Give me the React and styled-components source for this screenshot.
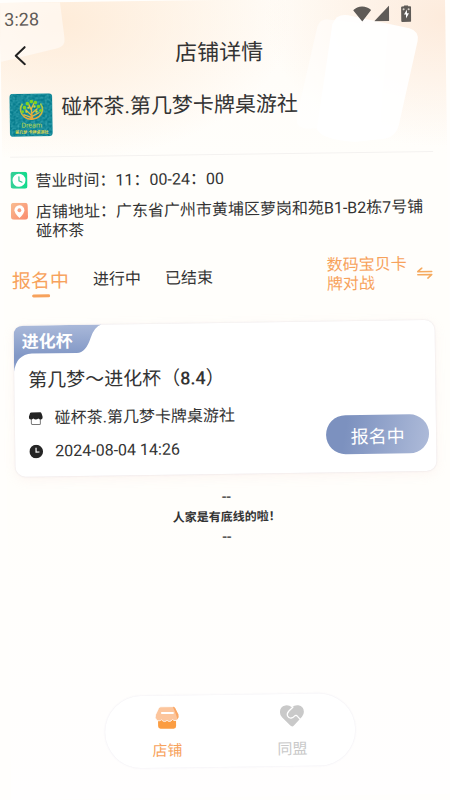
import React, { useState } from 'react'
import styled, { createGlobalStyle, ThemeProvider } from 'styled-components'

const theme = {
    text_primary: '#333333',
    primary: '#f7a25c',
    muted: '#c9c9c9',
    bg: '#fffefb',
    card: '#ffffff',
};

const GlobalStyle = createGlobalStyle`
    * {
        box-sizing: border-box;
    }
    body {
        margin: 0;
        background: #fffefc;
        color: #333333;
        font-family: Roboto, "Noto Sans CJK SC", sans-serif;
    }
    button {
        padding: 0;
        border: 0;
        background: none;
        color: inherit;
        font-family: inherit;
        cursor: pointer;
    }
    svg {
        display: block;
        flex-shrink: 0;
    }
`;

const Page = styled.div`
    display: flex;
    min-height: 100vh;
    padding: 3px 5px 0 0;
    overflow: hidden;
`;

// the whole phone screen leans slightly to the left
const Screen = styled.div`
    position: relative;
    display: flex;
    flex-direction: column;
    flex: 1;
    min-width: 0;
    padding: 0 14px 30px 8px;
    transform: rotate(-0.8deg);
    transform-origin: top left;
    background:
        radial-gradient(ellipse 180px 130px at 100% 20px, #fdebdc 0%, rgba(253, 235, 220, 0) 100%),
        radial-gradient(ellipse 230px 140px at 60px 20px, #feecd9 0%, rgba(254, 236, 217, 0) 100%),
        linear-gradient(#fffcf7, #fffefb 160px, #fffefb 500px, #fffefe);
`;

const Backdrop = styled.svg`
    position: absolute;
    top: 0;
    ${({ $side }) => $side}: 0;
`;

const StatusBar = styled.div`
    position: relative;
    display: flex;
    align-items: center;
    justify-content: space-between;
    height: 32px;
    padding-right: 20px;
    margin-left: -4px;
    color: #5f5b57;
    font-size: 18px;
`;

const StatusIcons = styled.div`
    display: flex;
    align-items: center;
    gap: 3px;
`;

const Header = styled.header`
    position: relative;
    display: grid;
    grid-template-columns: 32px 1fr 34px;
    align-items: center;
    height: 42px;
`;

const BackButton = styled.button`
    padding-left: 5px;
`;

const Title = styled.h1`
    margin: 0;
    font-size: 22px;
    font-weight: 400;
    line-height: 32px;
    text-align: center;
`;

const Shop = styled.section`
    position: relative;
    display: flex;
    gap: 9px;
    padding: 17px 0 20px;
    border-bottom: 1px solid #f4f2f0;
`;

const ShopName = styled.h2`
    margin: 0;
    font-size: 21px;
    font-weight: 400;
    line-height: 28px;
`;

const InfoList = styled.div`
    display: flex;
    flex-direction: column;
    gap: 12px;
    padding-top: 14px;
`;

const InfoRow = styled.div`
    display: flex;
    gap: 8px;
    font-size: 16px;
    line-height: 19px;
`;

const Filters = styled.div`
    display: flex;
    align-items: center;
    justify-content: space-between;
    margin-top: 19px;
    padding-right: 2px;
`;

const Tabs = styled.div`
    display: flex;
    gap: 24px;
`;

const Tab = styled.button`
    position: relative;
    height: 38px;
    color: ${({ theme, $active }) => ($active ? theme.primary : theme.text_primary)};
    font-size: ${({ $active }) => ($active ? '19px' : '16px')};
    &::after {
        content: '';
        display: ${({ $active }) => ($active ? 'block' : 'none')};
        position: absolute;
        bottom: 0;
        left: calc(50% - 9px);
        width: 18px;
        height: 3px;
        border-radius: 2px;
        background: ${({ theme }) => theme.primary};
    }
`;

const GameSwitch = styled.button`
    display: flex;
    align-items: center;
    gap: 9px;
    color: ${({ theme }) => theme.primary};
    font-size: 16px;
    line-height: 19px;
    text-align: left;
    span {
        width: 81px;
    }
`;

const Card = styled.article`
    margin: 28px 1px 0;
    border-radius: 10px;
    background: ${({ theme }) => theme.card};
    box-shadow: 0 0 2px rgba(120, 110, 150, 0.2), 0 3px 12px rgba(240, 200, 190, 0.16);
`;

const Ribbon = styled.div`
    position: relative;
    padding-left: 8px;
    color: #ffffff;
    font-size: 17px;
    font-weight: 700;
    line-height: 32px;
    span {
        position: relative;
    }
`;

const CardBody = styled.div`
    display: flex;
    align-items: flex-end;
    justify-content: space-between;
    padding: 10px 7px 15px 14px;
`;

const EventTitle = styled.h3`
    margin: 0 0 15px;
    font-size: 19px;
    font-weight: 400;
    line-height: 26px;
    white-space: nowrap;
    b {
        font-size: 18px;
        font-weight: 500;
    }
`;

const Detail = styled.div`
    display: flex;
    align-items: center;
    gap: 12px;
    font-size: 16px;
    line-height: 20px;
    white-space: nowrap;
    & + & {
        margin-top: 13px;
    }
`;

const JoinButton = styled.button`
    flex-shrink: 0;
    width: 103px;
    height: 39px;
    margin-bottom: 3px;
    border-radius: 20px;
    background: linear-gradient(100deg, #7c91bf 20%, #aebbd9);
    color: #ffffff;
    font-size: 18px;
`;

const EndNote = styled.div`
    margin: 13px 0 40px;
    font-size: 12px;
    line-height: 20px;
    text-align: center;
    p {
        margin: 0;
        font-size: 16px;
    }
    strong {
        display: block;
        font-weight: 700;
    }
`;

const TabBar = styled.nav`
    display: flex;
    align-self: center;
    width: 58%;
    min-width: 250px;
    max-width: 320px;
    margin-top: auto;
    border-radius: 36px;
    background: #ffffff;
    box-shadow: 0 0 2px rgba(120, 110, 170, 0.16);
`;

const NavLink = styled.a`
    display: flex;
    flex: 1;
    flex-direction: column;
    align-items: center;
    gap: 11px;
    padding: 10px 0 7px;
    color: ${({ theme, $active }) => ($active ? theme.primary : theme.muted)};
    font-size: 15px;
    line-height: 20px;
    text-decoration: none;
`;

const WifiIcon = () => (
    <svg width="18" height="16" viewBox="0 0 18 16" fill="#5f5b57">
        <path d="M9 15.500 0 4.300C2.500 1.900 5.600.5 9 .5s6.500 1.400 9 3.800z" />
    </svg>
);

const SignalIcon = () => (
    <svg width="15" height="16" viewBox="0 0 15 16" fill="#5f5b57">
        <path d="M15 0v15.500H0z" />
    </svg>
);

const BatteryIcon = () => (
    <svg width="19" height="17" viewBox="0 0 19 17">
        <path d="M12 1V0h4v1h2q1 0 1 1v13.500q0 1-1 1h-8q-1 0-1-1V2q0-1 1-1z" fill="#5f5b57" />
        <path d="m14.800 4.200-3 5h2v4l3-5.200h-2z" fill="#fff" />
        <circle cx="11.500" cy="4" r="1" fill="#d8d2ca" />
        <circle cx="16.500" cy="4" r="1" fill="#d8d2ca" />
    </svg>
);

const BackIcon = () => (
    <svg width="13" height="20" viewBox="0 0 13 20" fill="none" stroke="#222" strokeWidth="2" strokeLinecap="round" strokeLinejoin="round">
        <path d="M11 1.500 2 10l9 8.500" />
    </svg>
);

const ShopLogo = () => (
    <svg width="43" height="43" viewBox="0 0 43 43">
        <defs>
            <filter id="grain" x="0" y="0" width="100%" height="100%">
                <feTurbulence type="fractalNoise" baseFrequency="0.5" numOctaves="2" />
                <feColorMatrix values="0 0 0 0 0.15  0 0 0 0 0.65  0 0 0 0 0.7  0 1.200 0 0 -0.45" />
            </filter>
            <clipPath id="logoShape">
                <rect width="43" height="43" rx="4" />
            </clipPath>
            <linearGradient id="gold" x1="0" y1="0" x2="0" y2="1">
                <stop offset="0" stopColor="#9ed04b" />
                <stop offset="1" stopColor="#e9a53c" />
            </linearGradient>
        </defs>
        <g clipPath="url(#logoShape)">
            <rect width="43" height="43" fill="#087d8e" />
            <rect width="43" height="43" filter="url(#grain)" />
        </g>
        <path d="M13 10a11 10 0 1 0 18 0" fill="none" stroke="url(#gold)" strokeWidth="1.600" />
        <path d="M22 26V14m0 8-6-6m6 4 6-5m-6 9-8-3m8 2 8-4m-8-2-3-7m3 5 3-6" fill="none" stroke="#e8b842" strokeWidth="1.300" />
        <path d="M20 26q2-3 1.300-7h1.600q-.5 4 1.300 7z" fill="#e8a53a" />
        <g fill="#7ed321">
            <circle cx="15" cy="14" r="1.800" />
            <circle cx="18" cy="10" r="1.800" />
            <circle cx="22" cy="8" r="1.800" />
            <circle cx="26" cy="9" r="1.800" />
            <circle cx="29" cy="13" r="1.800" />
            <circle cx="13" cy="18" r="1.500" />
            <circle cx="31" cy="17" r="1.500" />
        </g>
        <g fill="#c9dc3c">
            <circle cx="19" cy="14" r="1.200" />
            <circle cx="25" cy="13" r="1.200" />
            <circle cx="17" cy="18" r="1.200" />
            <circle cx="27" cy="18" r="1.200" />
        </g>
        <text x="22" y="34" textAnchor="middle" fontSize="7" fill="#b9d84e">Dream</text>
        <text x="22" y="40" textAnchor="middle" fontSize="4" fontWeight="700" fill="#e3d94c">第几梦·卡牌桌游社</text>
    </svg>
);

const HoursIcon = () => (
    <svg width="17" height="17" viewBox="0 0 17 17">
        <defs>
            <linearGradient id="green">
                <stop offset="0" stopColor="#36cf98" />
                <stop offset="1" stopColor="#12dc8c" />
            </linearGradient>
        </defs>
        <rect width="17" height="17" rx="3" fill="url(#green)" />
        <circle cx="8.500" cy="8.500" r="6.500" fill="#fff" />
        <path d="M8.500 5v4l3 1.500" fill="none" stroke="#35c795" strokeWidth="1.200" strokeLinecap="round" />
    </svg>
);

const PlaceIcon = () => (
    <svg width="17" height="17" viewBox="0 0 17 17">
        <defs>
            <linearGradient id="coral" x1="0" y1="0" x2="1" y2="1">
                <stop offset="0" stopColor="#f9bd92" />
                <stop offset="1" stopColor="#fa8a6d" />
            </linearGradient>
        </defs>
        <rect width="17" height="17" rx="3" fill="url(#coral)" />
        <path d="M8.500 15.300Q3.500 10.500 3.500 7.500a5 5 0 0 1 10 0q0 3-5 7.800z" fill="#fff" />
        <circle cx="8.500" cy="7.500" r="1.900" fill="#f8a184" />
    </svg>
);

const SwapIcon = () => (
    <svg width="16" height="12" viewBox="0 0 16 12" fill="none" stroke="#f5aa5f" strokeWidth="1.600" strokeLinecap="round" strokeLinejoin="round">
        <path d="M5 1 1 4.500h14M1 7.500h14L11 11" />
    </svg>
);

const StoreIcon = () => (
    <svg width="14" height="14" viewBox="0 0 14 14">
        <path d="M2.500 6v6q0 1 1 1h7q1 0 1-1V6" fill="#fff" stroke="#777" strokeWidth="1" />
        <path d="M2.500.8h9q.8 0 1.100.7L14 5.300Q14 8 11.800 8 10.500 8 9.500 7 8.300 8 7 8 5.700 8 4.500 7 3.500 8 2.200 8 0 8 0 5.300l1.400-3.800q.3-.7 1.100-.7z" fill="#222" />
    </svg>
);

const ClockIcon = () => (
    <svg width="14" height="14" viewBox="0 0 14 14">
        <circle cx="7" cy="7" r="6.800" fill="#252525" />
        <path d="M6.800 3.300v4.200h3.400" fill="none" stroke="#fff" strokeWidth="1.200" />
    </svg>
);

const NavStoreIcon = () => (
    <svg width="24" height="24" viewBox="0 0 24 24">
        <path d="M3 13h18v7.500q0 2.500-2.500 2.500h-13Q3 23 3 20.500z" fill="#fb9d42" />
        <path d="M6 1h12q1.500 0 2.300 1.500L23.500 9q1 3-1 5-1 1-2.500 1-1.500 0-2.500-1.200Q16 15.800 14.500 15.800T12 14.500q-1 1.300-2.500 1.300T6.500 14Q5.500 15 4 15q-1.500 0-2.500-1-2-2-1-5l3.200-6.500Q4.500 1 6 1z" fill="#fcc59c" stroke="#fff" strokeWidth=".8" />
        <path d="M18 1q1.500 0 2.300 1.500L23.500 9q.8 3-1 5-.8-4-4.500-13z" fill="#faa765" />
        <path d="M7 7.300h11" stroke="#fff" strokeWidth="2" strokeLinecap="round" />
    </svg>
);

const AllianceIcon = () => (
    <svg width="24" height="24" viewBox="0 0 24 24">
        <path d="M12 3.300Q15 .8 18.500 1.400 24 2.500 24 8q0 2.800-2 5l-8.200 8.600q-1.800 1.700-3.600 0L2 13Q0 10.800 0 8 0 2.500 5.500 1.400 9 .8 12 3.300z" fill="#c9c9c9" />
        <path d="M13 3.300 9 7q-2.400 2.600-1.400 5 1 2.200 3.600 2 1.800-.2 3.300-1.800 1.500-1.700 3 .2l2.500 2.800" fill="none" stroke="#fff" strokeWidth="1.300" strokeLinecap="round" />
    </svg>
);

const RibbonShape = () => (
    <Backdrop $side="left" width="88" height="46" viewBox="0 0 88 46">
        <defs>
            <linearGradient id="ribbon" x1="0" y1="0" x2="0" y2="1">
                <stop offset="0" stopColor="#a9b8d9" />
                <stop offset="0.65" stopColor="#8298c6" />
            </linearGradient>
        </defs>
        <path d="M0 46V10Q0 0 10 0h78Q81 2 77 13 72 28 63 28H18Q2 29 0 46z" fill="url(#ribbon)" />
    </Backdrop>
);

const tabs = ['报名中', '进行中', '已结束'];

const App = () => {
    const [active, setActive] = useState(0);

    return (
        <ThemeProvider theme={theme}>
            <GlobalStyle />
            <Page>
                <Screen>
                    <Backdrop $side="left" width="70" height="64" viewBox="0 0 70 64">
                        <path d="M0 0h60l4 36q1 8-7 10L0 59z" fill="#fff" opacity=".5" />
                    </Backdrop>
                    <Backdrop $side="right" width="150" height="150" viewBox="0 0 150 150">
                        <path d="M22 28q3-8 11-7l60 8-10 101-75 0q-10-2-8-12z" fill="#fff" opacity=".5" />
                        <path d="M37 26q4-11 16-9l61 14q10 3 8 13l-20 84q-3 11-14 13l-30 3q-35-3-38-14z" fill="#fff" opacity=".9" />
                    </Backdrop>
                    <StatusBar>
                        <span>3:28</span>
                        <StatusIcons>
                            <WifiIcon />
                            <SignalIcon />
                            <BatteryIcon />
                        </StatusIcons>
                    </StatusBar>
                    <Header>
                        <BackButton aria-label="返回">
                            <BackIcon />
                        </BackButton>
                        <Title>店铺详情</Title>
                    </Header>
                    <Shop>
                        <ShopLogo />
                        <ShopName>碰杯茶.第几梦卡牌桌游社</ShopName>
                    </Shop>
                    <InfoList>
                        <InfoRow>
                            <HoursIcon />
                            <span>营业时间：11：00-24：00</span>
                        </InfoRow>
                        <InfoRow>
                            <PlaceIcon />
                            <span>店铺地址：广东省广州市黄埔区萝岗和苑B1-B2栋7号铺碰杯茶</span>
                        </InfoRow>
                    </InfoList>
                    <Filters>
                        <Tabs>
                            {tabs.map((tab, index) => (
                                <Tab key={tab} $active={index === active} onClick={() => setActive(index)}>
                                    {tab}
                                </Tab>
                            ))}
                        </Tabs>
                        <GameSwitch>
                            <span>数码宝贝卡牌对战</span>
                            <SwapIcon />
                        </GameSwitch>
                    </Filters>
                    <Card>
                        <Ribbon>
                            <RibbonShape />
                            <span>进化杯</span>
                        </Ribbon>
                        <CardBody>
                            <div>
                                <EventTitle>第几梦～进化杯（<b>8.4</b>）</EventTitle>
                                <Detail>
                                    <StoreIcon />
                                    <span>碰杯茶.第几梦卡牌桌游社</span>
                                </Detail>
                                <Detail>
                                    <ClockIcon />
                                    <span>2024-08-04 14:26</span>
                                </Detail>
                            </div>
                            <JoinButton>报名中</JoinButton>
                        </CardBody>
                    </Card>
                    <EndNote>
                        <p>--</p>
                        <strong>人家是有底线的啦！</strong>
                        <p>--</p>
                    </EndNote>
                    <TabBar>
                        <NavLink href="#shop" $active>
                            <NavStoreIcon />
                            <span>店铺</span>
                        </NavLink>
                        <NavLink href="#alliance">
                            <AllianceIcon />
                            <span>同盟</span>
                        </NavLink>
                    </TabBar>
                </Screen>
            </Page>
        </ThemeProvider>
    )
}

export default App
